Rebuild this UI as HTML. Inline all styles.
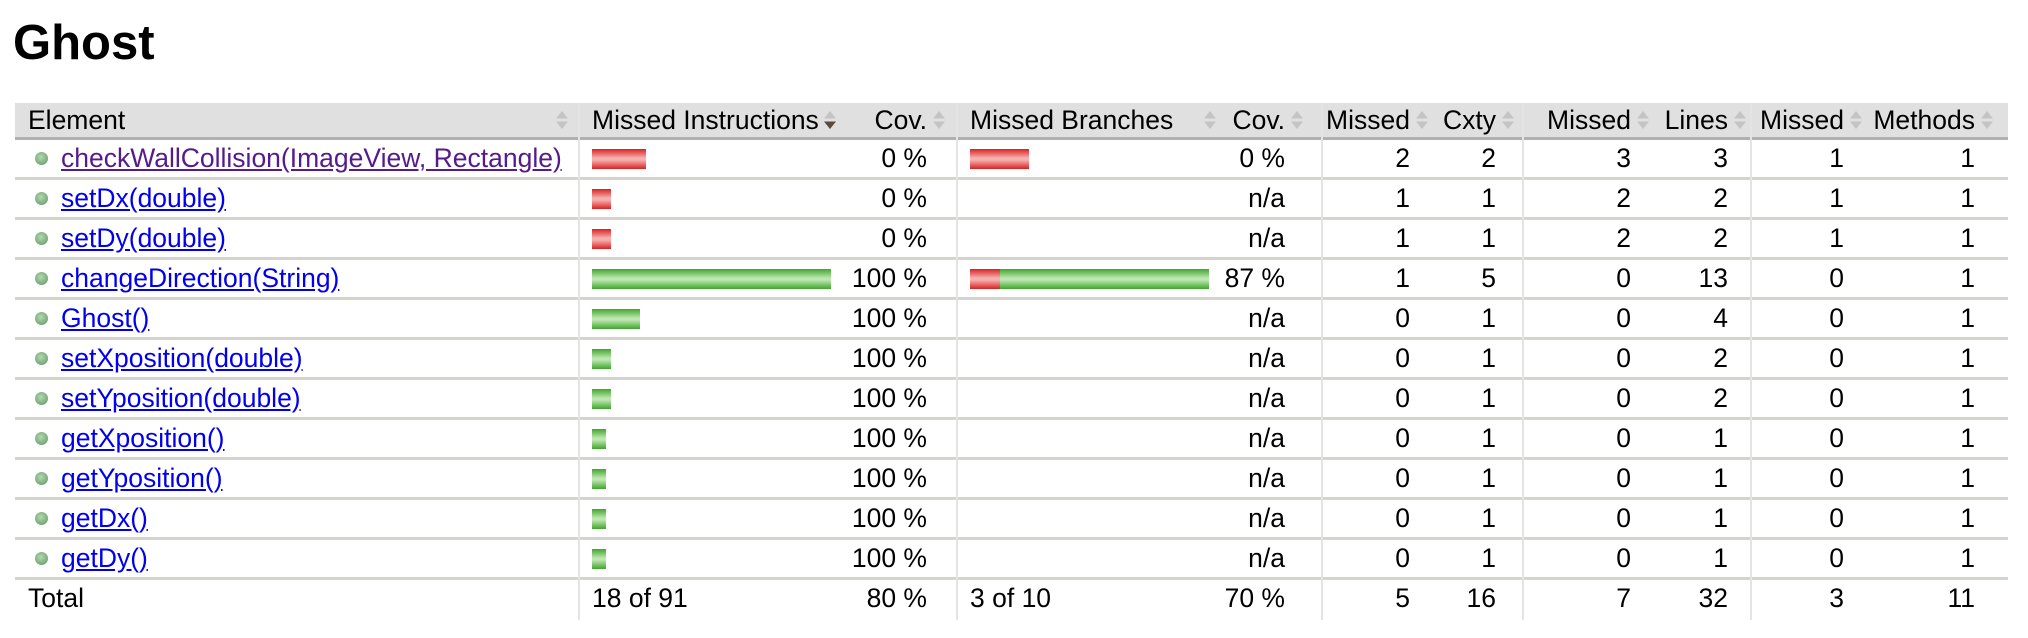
<!DOCTYPE html>
<html><head><meta charset="utf-8"><style>
*{box-sizing:border-box;margin:0;padding:0}
body{width:2028px;height:638px;background:#fff;font-family:"Liberation Sans",Arial,sans-serif;color:#000;position:relative;overflow:hidden}
h1{position:absolute;left:13px;top:13px;font-size:49px;font-weight:bold;line-height:60px}
.row{position:absolute;left:15px;width:1993px;height:40px;border-bottom:3px solid #d6d3ce;font-size:26.5px}
.row.head{top:103px;height:37px;border-bottom:3px solid #b0b0b0;background:#e0e0e0}
.row.total{border-bottom:none}
.c{position:absolute;top:0;height:100%;line-height:37px;white-space:nowrap}
.head .c{line-height:34px}
.r{text-align:right}
.c0{left:0;width:564px;padding-left:13px}
.c1{left:564px;width:266px;padding-left:13px}
.c2{left:830px;width:112px;padding-right:30px}
.c3{left:942px;width:265px;padding-left:13px}
.c4{left:1207px;width:100px;padding-right:37px}
.c5{left:1307px;width:113px;padding-right:25px}
.c6{left:1420px;width:88px;padding-right:27px}
.c7{left:1508px;width:133px;padding-right:25px}
.c8{left:1641px;width:95px;padding-right:23px}
.c9{left:1736px;width:118px;padding-right:25px}
.c10{left:1854px;width:139px;padding-right:33px}
.ic{position:absolute;top:7px;width:14px;height:20px}
.bar{display:inline-block;height:20px;vertical-align:middle;margin-top:-3px}
.red{background:linear-gradient(#d92020,#f6b0b0 45%,#f6b0b0 55%,#d92020)}
.grn{background:linear-gradient(#3fa62b,#bde6b0 45%,#bde6b0 55%,#3fa62b)}
.bul{display:inline-block;width:13px;height:13px;border-radius:50%;background:radial-gradient(circle at 45% 40%,#b6d8b0,#7fae7f 60%,#5d8f5d);vertical-align:middle;margin:-3px 13px 0 7px}
a{color:#0000ee;text-decoration:underline}
a.v{color:#551a8b}
.vl{position:absolute;top:103px;width:2px;height:517px;background:#e4e4e4}
</style></head><body>
<h1>Ghost</h1>
<svg width="0" height="0" style="position:absolute"><defs>
<g id="s"><polygon points="7,1 13,8.5 1,8.5" fill="#c4c4c4"/><polygon points="1,11.5 13,11.5 7,19" fill="#c4c4c4"/></g>
<g id="sd"><polygon points="7,1 13,8.5 1,8.5" fill="#c4c4c4"/><polygon points="1,11.5 13,11.5 7,19" fill="#5c4b3b"/></g>
</defs></svg>
<div class="row head">
<div class="c c0">Element<svg class="ic" style="right:10px" viewBox="0 0 14 20"><use href="#s"/></svg></div>
<div class="c c1">Missed Instructions<svg class="ic" style="left:244px" viewBox="0 0 14 20"><use href="#sd"/></svg></div>
<div class="c c2 r">Cov.<svg class="ic" style="right:11px" viewBox="0 0 14 20"><use href="#s"/></svg></div>
<div class="c c3">Missed Branches<svg class="ic" style="right:5px" viewBox="0 0 14 20"><use href="#s"/></svg></div>
<div class="c c4 r">Cov.<svg class="ic" style="right:18px" viewBox="0 0 14 20"><use href="#s"/></svg></div>
<div class="c c5 r">Missed<svg class="ic" style="right:6px" viewBox="0 0 14 20"><use href="#s"/></svg></div>
<div class="c c6 r">Cxty<svg class="ic" style="right:8px" viewBox="0 0 14 20"><use href="#s"/></svg></div>
<div class="c c7 r">Missed<svg class="ic" style="right:6px" viewBox="0 0 14 20"><use href="#s"/></svg></div>
<div class="c c8 r">Lines<svg class="ic" style="right:4px" viewBox="0 0 14 20"><use href="#s"/></svg></div>
<div class="c c9 r">Missed<svg class="ic" style="right:6px" viewBox="0 0 14 20"><use href="#s"/></svg></div>
<div class="c c10 r">Methods<svg class="ic" style="right:14px" viewBox="0 0 14 20"><use href="#s"/></svg></div>
</div>

<div class="row" style="top:140px"><div class="c c0"><span class="bul"></span><a class="v">checkWallCollision(ImageView, Rectangle)</a></div><div class="c c1"><span class="bar red" style="width:54px"></span></div><div class="c c2 r">0 %</div><div class="c c3"><span class="bar red" style="width:59px"></span></div><div class="c c4 r">0 %</div><div class="c c5 r">2</div><div class="c c6 r">2</div><div class="c c7 r">3</div><div class="c c8 r">3</div><div class="c c9 r">1</div><div class="c c10 r">1</div></div>
<div class="row" style="top:180px"><div class="c c0"><span class="bul"></span><a>setDx(double)</a></div><div class="c c1"><span class="bar red" style="width:19px"></span></div><div class="c c2 r">0 %</div><div class="c c3"></div><div class="c c4 r">n/a</div><div class="c c5 r">1</div><div class="c c6 r">1</div><div class="c c7 r">2</div><div class="c c8 r">2</div><div class="c c9 r">1</div><div class="c c10 r">1</div></div>
<div class="row" style="top:220px"><div class="c c0"><span class="bul"></span><a>setDy(double)</a></div><div class="c c1"><span class="bar red" style="width:19px"></span></div><div class="c c2 r">0 %</div><div class="c c3"></div><div class="c c4 r">n/a</div><div class="c c5 r">1</div><div class="c c6 r">1</div><div class="c c7 r">2</div><div class="c c8 r">2</div><div class="c c9 r">1</div><div class="c c10 r">1</div></div>
<div class="row" style="top:260px"><div class="c c0"><span class="bul"></span><a>changeDirection(String)</a></div><div class="c c1"><span class="bar grn" style="width:239px"></span></div><div class="c c2 r">100 %</div><div class="c c3"><span class="bar red" style="width:30px"></span><span class="bar grn" style="width:209px"></span></div><div class="c c4 r">87 %</div><div class="c c5 r">1</div><div class="c c6 r">5</div><div class="c c7 r">0</div><div class="c c8 r">13</div><div class="c c9 r">0</div><div class="c c10 r">1</div></div>
<div class="row" style="top:300px"><div class="c c0"><span class="bul"></span><a>Ghost()</a></div><div class="c c1"><span class="bar grn" style="width:48px"></span></div><div class="c c2 r">100 %</div><div class="c c3"></div><div class="c c4 r">n/a</div><div class="c c5 r">0</div><div class="c c6 r">1</div><div class="c c7 r">0</div><div class="c c8 r">4</div><div class="c c9 r">0</div><div class="c c10 r">1</div></div>
<div class="row" style="top:340px"><div class="c c0"><span class="bul"></span><a>setXposition(double)</a></div><div class="c c1"><span class="bar grn" style="width:19px"></span></div><div class="c c2 r">100 %</div><div class="c c3"></div><div class="c c4 r">n/a</div><div class="c c5 r">0</div><div class="c c6 r">1</div><div class="c c7 r">0</div><div class="c c8 r">2</div><div class="c c9 r">0</div><div class="c c10 r">1</div></div>
<div class="row" style="top:380px"><div class="c c0"><span class="bul"></span><a>setYposition(double)</a></div><div class="c c1"><span class="bar grn" style="width:19px"></span></div><div class="c c2 r">100 %</div><div class="c c3"></div><div class="c c4 r">n/a</div><div class="c c5 r">0</div><div class="c c6 r">1</div><div class="c c7 r">0</div><div class="c c8 r">2</div><div class="c c9 r">0</div><div class="c c10 r">1</div></div>
<div class="row" style="top:420px"><div class="c c0"><span class="bul"></span><a>getXposition()</a></div><div class="c c1"><span class="bar grn" style="width:14px"></span></div><div class="c c2 r">100 %</div><div class="c c3"></div><div class="c c4 r">n/a</div><div class="c c5 r">0</div><div class="c c6 r">1</div><div class="c c7 r">0</div><div class="c c8 r">1</div><div class="c c9 r">0</div><div class="c c10 r">1</div></div>
<div class="row" style="top:460px"><div class="c c0"><span class="bul"></span><a>getYposition()</a></div><div class="c c1"><span class="bar grn" style="width:14px"></span></div><div class="c c2 r">100 %</div><div class="c c3"></div><div class="c c4 r">n/a</div><div class="c c5 r">0</div><div class="c c6 r">1</div><div class="c c7 r">0</div><div class="c c8 r">1</div><div class="c c9 r">0</div><div class="c c10 r">1</div></div>
<div class="row" style="top:500px"><div class="c c0"><span class="bul"></span><a>getDx()</a></div><div class="c c1"><span class="bar grn" style="width:14px"></span></div><div class="c c2 r">100 %</div><div class="c c3"></div><div class="c c4 r">n/a</div><div class="c c5 r">0</div><div class="c c6 r">1</div><div class="c c7 r">0</div><div class="c c8 r">1</div><div class="c c9 r">0</div><div class="c c10 r">1</div></div>
<div class="row" style="top:540px"><div class="c c0"><span class="bul"></span><a>getDy()</a></div><div class="c c1"><span class="bar grn" style="width:14px"></span></div><div class="c c2 r">100 %</div><div class="c c3"></div><div class="c c4 r">n/a</div><div class="c c5 r">0</div><div class="c c6 r">1</div><div class="c c7 r">0</div><div class="c c8 r">1</div><div class="c c9 r">0</div><div class="c c10 r">1</div></div>
<div class="row total" style="top:580px"><div class="c c0">Total</div><div class="c c1">18 of 91</div><div class="c c2 r">80 %</div><div class="c c3">3 of 10</div><div class="c c4 r">70 %</div><div class="c c5 r">5</div><div class="c c6 r">16</div><div class="c c7 r">7</div><div class="c c8 r">32</div><div class="c c9 r">3</div><div class="c c10 r">11</div></div>

<div class="vl" style="left:578px"></div>
<div class="vl" style="left:956px"></div>
<div class="vl" style="left:1321px"></div>
<div class="vl" style="left:1522px"></div>
<div class="vl" style="left:1750px"></div>
</body></html>
